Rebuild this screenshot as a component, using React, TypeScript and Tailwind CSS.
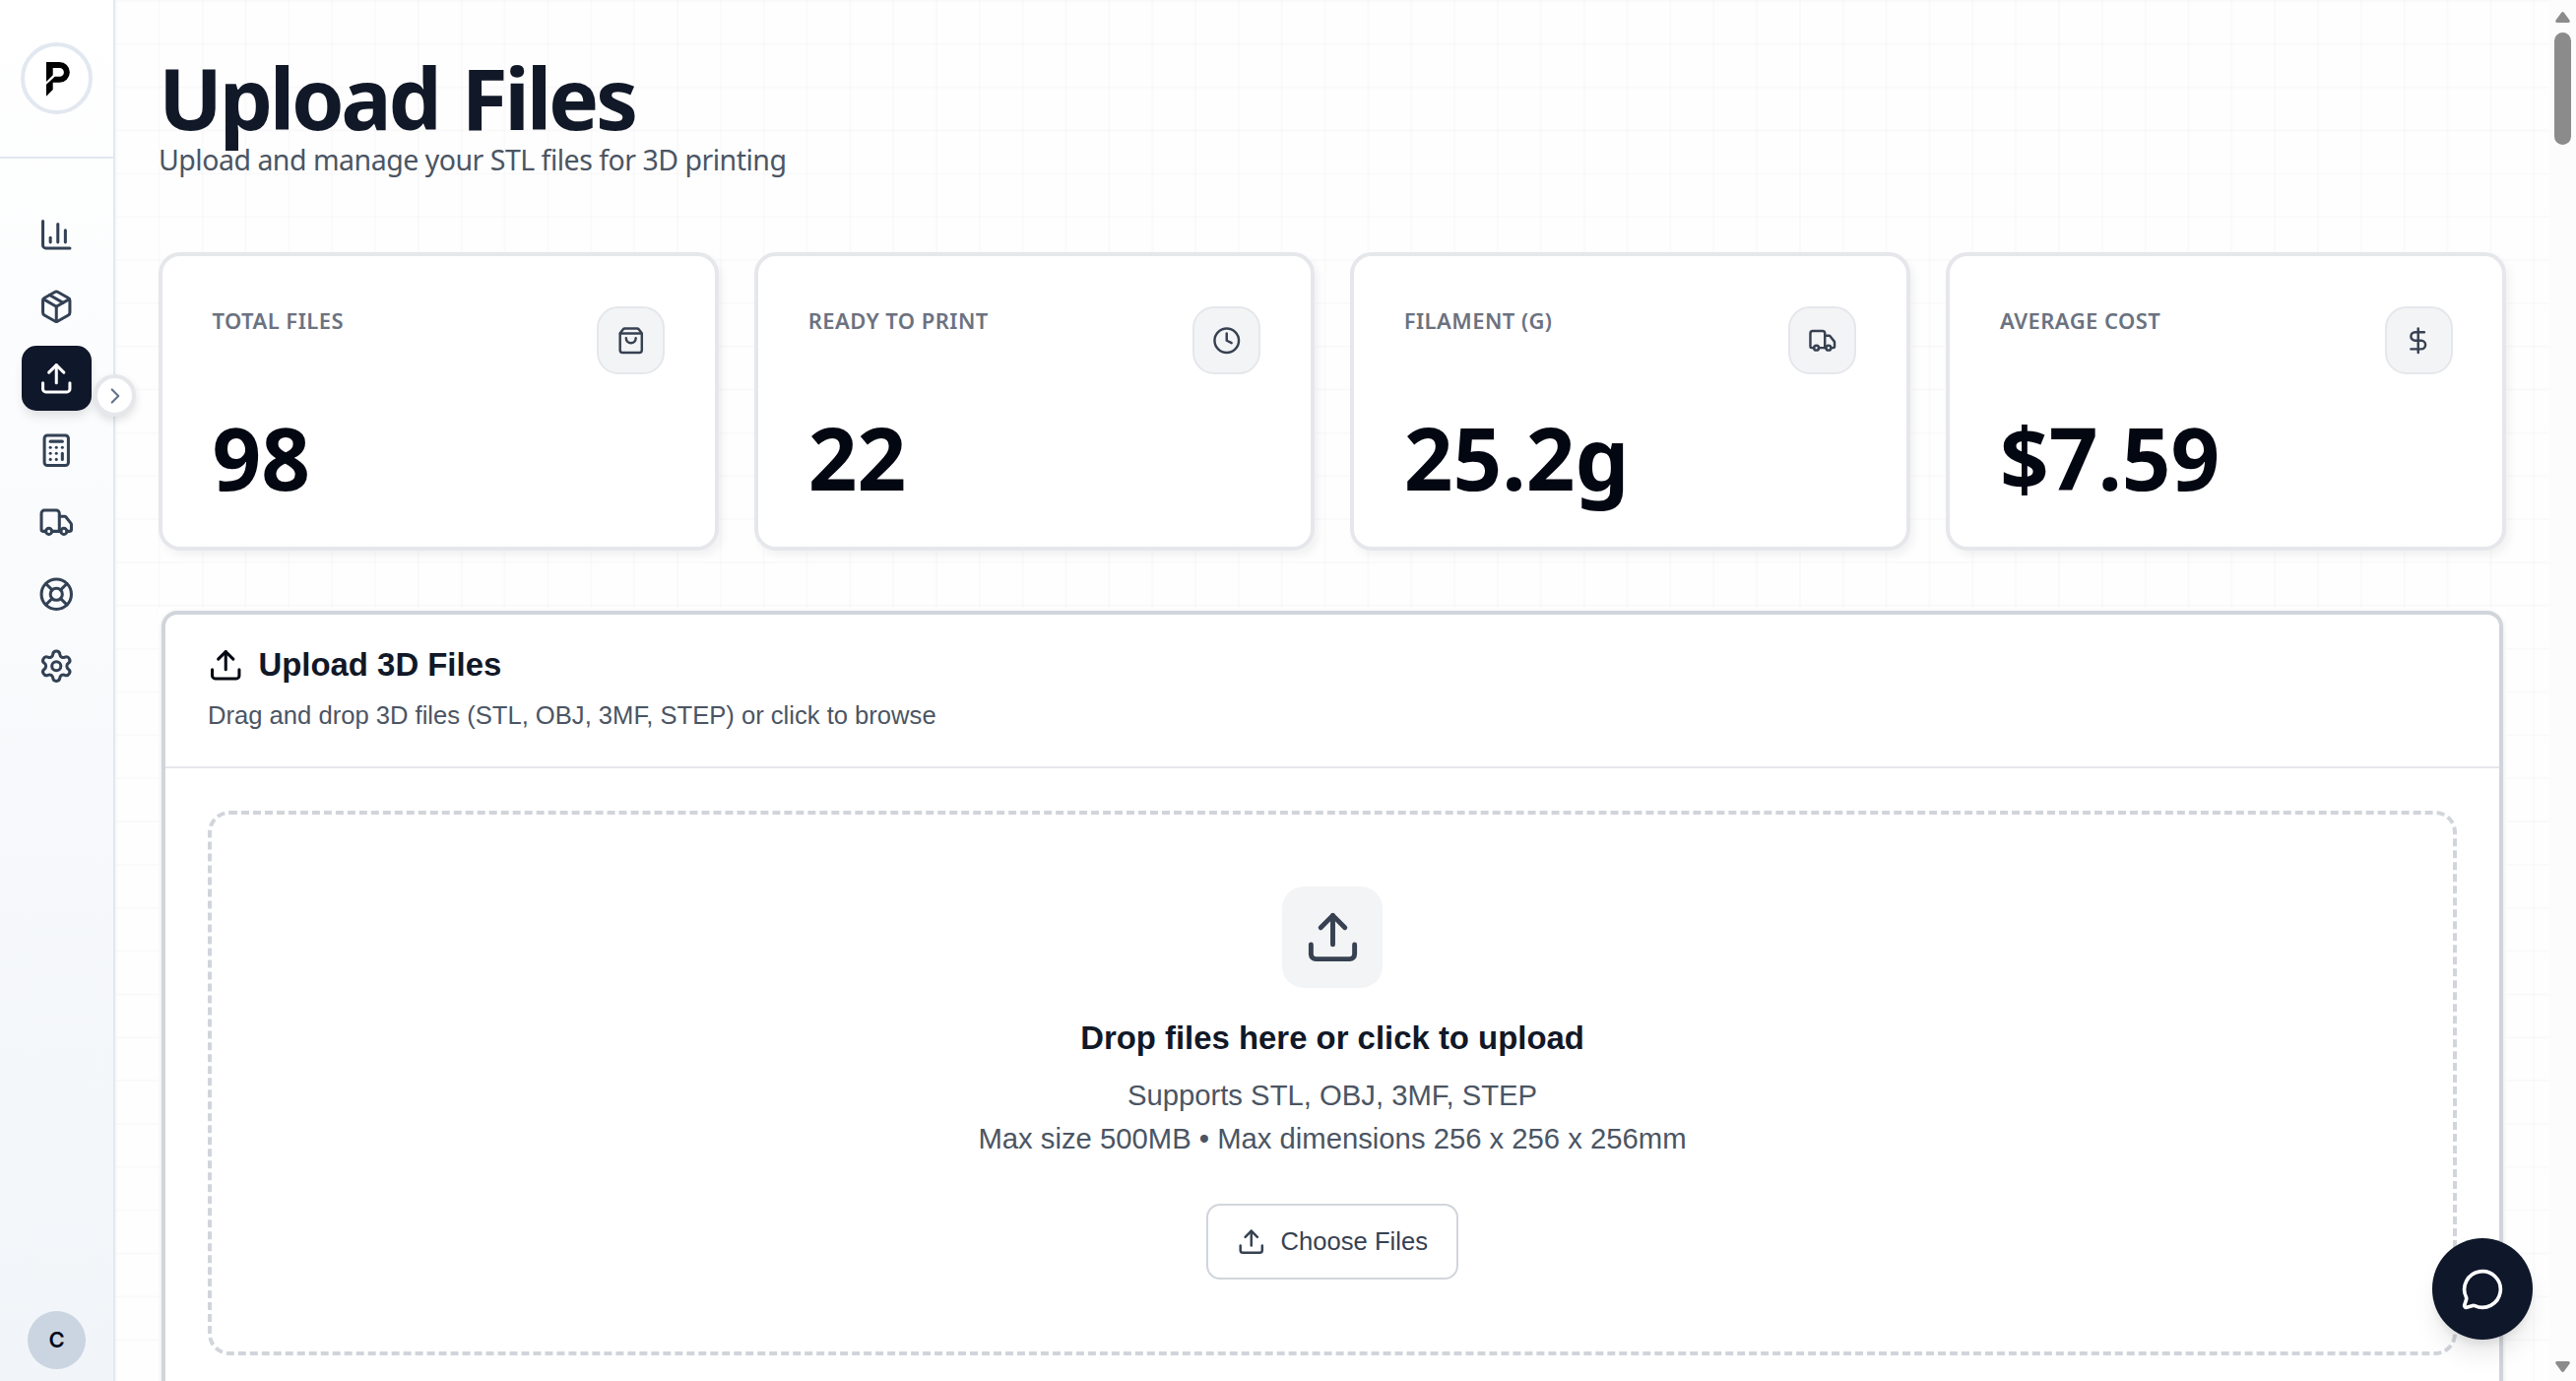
import {
  Calculator,
  ChartColumn,
  ChevronRight,
  Clock,
  DollarSign,
  LifeBuoy,
  MessageCircle,
  Package,
  Settings,
  ShoppingBag,
  Truck,
  Upload,
} from 'lucide-react';
import type { LucideIcon } from 'lucide-react';
import { clsx } from 'clsx';

const navItems: { icon: LucideIcon; label: string; active?: boolean }[] = [
  { icon: ChartColumn, label: 'Dashboard' },
  { icon: Package, label: 'Orders' },
  { icon: Upload, label: 'Upload', active: true },
  { icon: Calculator, label: 'Calculator' },
  { icon: Truck, label: 'Shipping' },
  { icon: LifeBuoy, label: 'Support' },
  { icon: Settings, label: 'Settings' },
];

const stats: { label: string; value: string; icon: LucideIcon }[] = [
  { label: 'TOTAL FILES', value: '98', icon: ShoppingBag },
  { label: 'READY TO PRINT', value: '22', icon: Clock },
  { label: 'FILAMENT (G)', value: '25.2g', icon: Truck },
  { label: 'AVERAGE COST', value: '$7.59', icon: DollarSign },
];

function Logo() {
  return (
    <div className="flex size-[73px] items-center justify-center rounded-full border-4 border-[#e2e8f0] bg-white">
      <svg viewBox="0 0 24 35" className="mt-px ml-[3px] h-[35px] w-[24px]" fill="#000">
        <path d="M0 0H13.5A10.3 10.3 0 0 1 13.5 20.7H6.7V28L0 34.7V22.7L8.7 14.8H13.5A4.4 4.4 0 0 0 13.5 6H6.7V13.3L0 20Z" />
      </svg>
    </div>
  );
}

function Sidebar() {
  return (
    <aside className="relative flex w-[117px] shrink-0 flex-col border-r-2 border-[#e2e8f0] bg-linear-to-b from-white via-[#f8fafc] to-[#f1f5f9]">
      <div className="flex h-[161px] items-center justify-center border-b-2 border-[#e2e8f0]">
        <Logo />
      </div>
      <nav className="mt-[44px] flex flex-col items-center gap-[7px]">
        {navItems.map(({ icon: Icon, label, active }) => (
          <a
            key={label}
            aria-label={label}
            className={clsx(
              'flex h-[66px] w-[71px] items-center justify-center rounded-[15px]',
              active ? 'bg-[#0f172a] text-white shadow-[0_7px_11px_-2px_rgba(0,0,0,0.12)]' : 'text-[#334155]',
            )}
          >
            <Icon size={36.5} />
          </a>
        ))}
      </nav>
      <div className="mt-auto mb-[12px] flex justify-center">
        <div className="flex size-[59px] items-center justify-center rounded-full bg-[#cbd5e1] font-['Inter',sans-serif] text-[22px] font-semibold text-[#020617]">
          C
        </div>
      </div>
      <button
        type="button"
        aria-label="Expand"
        className="absolute top-[380px] left-[95px] z-10 flex size-[43px] items-center justify-center rounded-full border-4 border-[#e5e7eb] bg-white text-[#64748b] shadow-[0_4px_8px_rgba(0,0,0,0.12)]"
      >
        <ChevronRight size={26} className="shrink-0" />
      </button>
    </aside>
  );
}

function StatCard({ label, value, icon: Icon }: { label: string; value: string; icon: LucideIcon }) {
  return (
    <div className="flex h-[303px] flex-col justify-between rounded-[22px] border-4 border-[#e5e7eb] bg-white px-[50.5px] pt-[50px] shadow-[4px_5px_9px_rgba(0,0,0,0.05)]">
      <div className="flex items-start justify-between">
        <span className="pt-px text-[22px] leading-[29px] font-semibold tracking-[0.02em] text-[#6b7280]">{label}</span>
        <div className="mt-px flex size-[69px] items-center justify-center rounded-[22px] border-2 border-[#e5e7eb] bg-[#f3f4f6] text-[#374151]">
          <Icon size={29.5} />
        </div>
      </div>
      <div className="mb-[47px] text-[87px] leading-[88px] font-bold text-[#030712]">{value}</div>
    </div>
  );
}

function UploadPanel() {
  return (
    <section className="mt-[58px] h-[900px] overflow-hidden bg-white p-[3px] font-['Liberation_Sans',Arial,sans-serif]">
      <div className="h-full rounded-[16px] border-4 border-[#d1d5db] bg-white shadow-[0_2px_6px_rgba(0,0,0,0.1)]">
        <header className="h-[156px] border-b-2 border-[#e5e7eb] px-[43px] pt-[31px]">
          <div className="flex items-center gap-[15px] text-[#111827]">
            <Upload size={36.5} className="text-[#030712]" />
            <h2 className="text-[32.9px] leading-[40px] font-bold">Upload 3D Files</h2>
          </div>
          <p className="mt-[13px] text-[25.6px] leading-[36px] text-[#4b5563]">
            Drag and drop 3D files (STL, OBJ, 3MF, STEP) or click to browse
          </p>
        </header>
        <div className="px-[43px] pt-[43px]">
          <div className="flex h-[553px] flex-col items-center rounded-[22px] border-4 border-dashed border-[#d1d5db] pt-[73px]">
            <div className="flex h-[103px] w-[102px] items-center justify-center rounded-[22px] bg-[#f3f4f6] text-[#374151]">
              <Upload size={59} />
            </div>
            <h3 className="mt-[29px] text-[32.9px] leading-[44px] font-bold text-[#111827]">
              Drop files here or click to upload
            </h3>
            <div className="mt-[14px] text-center text-[29.25px] leading-[44px] text-[#4b5563]">
              <p>Supports STL, OBJ, 3MF, STEP</p>
              <p>Max size 500MB • Max dimensions 256 x 256 x 256mm</p>
            </div>
            <button
              type="button"
              className="mt-[44px] flex h-[77px] w-[256px] items-center justify-center gap-[15px] rounded-[14px] border-2 border-[#d1d5db] bg-white text-[25.6px] text-[#374151]"
            >
              <Upload size={29.5} />
              Choose Files
            </button>
          </div>
        </div>
      </div>
    </section>
  );
}

function Scrollbar() {
  return (
    <div className="flex w-[27px] shrink-0 flex-col items-center bg-[#fcfcfc] pt-[12px] pb-[9px]">
      <svg width="15" height="11" viewBox="0 0 15 11" fill="#8b8b8b">
        <path d="M6 1Q7.5-1 9 1L14.5 8.5Q15.5 11 13 11H2Q-.5 11 .5 8.5Z" />
      </svg>
      <div className="mt-[10px] h-[114px] w-[17px] rounded-full bg-[#8b8b8b]" />
      <svg width="15" height="11" viewBox="0 0 15 11" fill="#8b8b8b" className="mt-auto">
        <path d="M6 10Q7.5 12 9 10L14.5 2.5Q15.5 0 13 0H2Q-.5 0 .5 2.5Z" />
      </svg>
    </div>
  );
}

export default function App() {
  return (
    <div className="flex h-[1402px] w-[2616px] overflow-hidden bg-[#fefefe] font-['Noto_Sans','Open_Sans',sans-serif]">
      <Sidebar />
      <main className="min-w-0 flex-1 bg-[linear-gradient(to_right,rgba(0,0,0,0.016)_1.8px,transparent_1.8px),linear-gradient(to_bottom,rgba(0,0,0,0.016)_1.8px,transparent_1.8px)] bg-size-[43.85px_43.85px] px-[44px] pt-[41px]">
        <h1 className="text-[86px] leading-[116px] font-bold tracking-[-0.039em] text-[#111827] [word-spacing:4px]">
          Upload Files
        </h1>
        <p className="-mt-[15px] text-[28.5px] leading-[40px] tracking-[-0.5px] text-[#4b5563]">
          Upload and manage your STL files for 3D printing
        </p>
        <div className="mt-[74px] grid grid-cols-4 gap-[36.5px]">
          {stats.map((stat) => (
            <StatCard key={stat.label} {...stat} />
          ))}
        </div>
        <UploadPanel />
      </main>
      <Scrollbar />
      <button
        type="button"
        aria-label="Chat"
        className="fixed top-[1257px] left-[2470px] flex h-[103px] w-[102px] items-center justify-center rounded-full bg-[#0f172a] text-white shadow-[0_18px_27px_-5px_rgba(0,0,0,0.1),0_7px_11px_-4px_rgba(0,0,0,0.1)]"
      >
        <MessageCircle size={44} />
      </button>
    </div>
  );
}
